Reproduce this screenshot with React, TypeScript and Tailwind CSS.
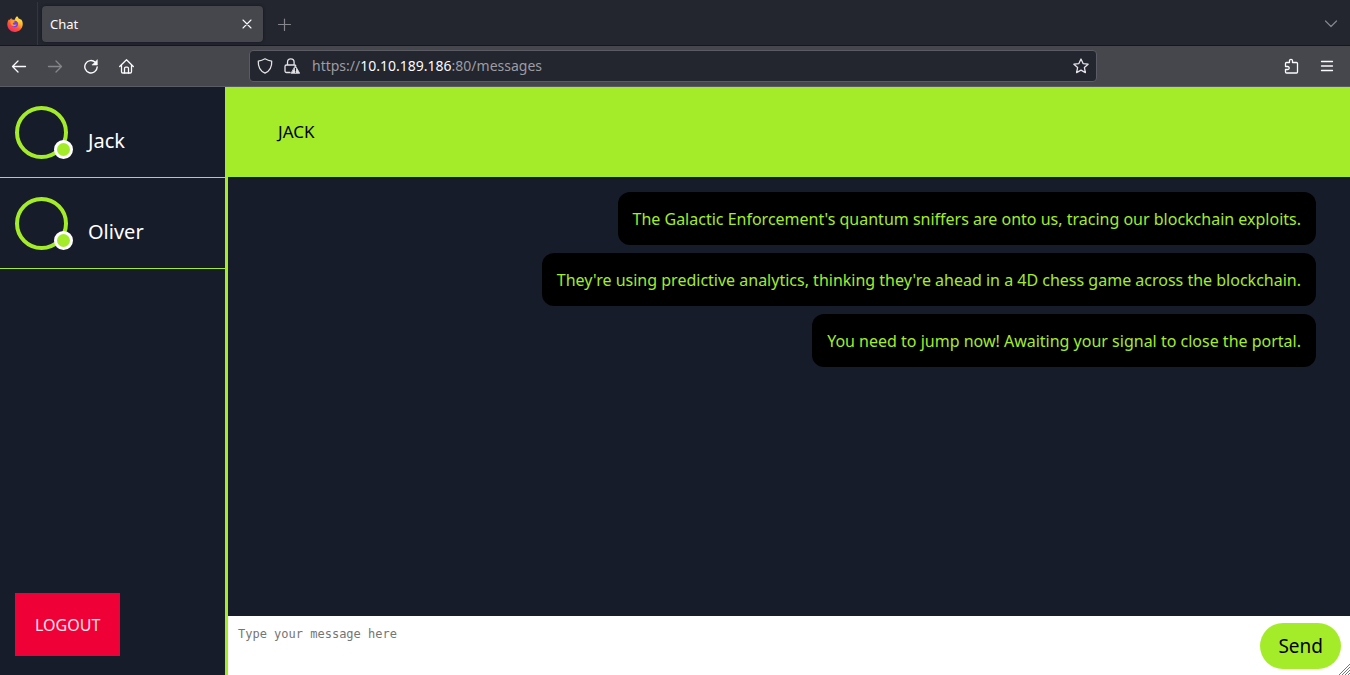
import type { ReactNode } from "react";

const contacts = ["Jack", "Oliver"];

const messages = [
  "The Galactic Enforcement's quantum sniffers are onto us, tracing our blockchain exploits.",
  "They're using predictive analytics, thinking they're ahead in a 4D chess game across the blockchain.",
  "You need to jump now! Awaiting your signal to close the portal.",
];

function Icon({ children, className = "" }: { children: ReactNode; className?: string }) {
  return (
    <svg
      viewBox="0 0 16 16"
      className={`size-4 shrink-0 ${className}`}
      fill="none"
      stroke="currentColor"
      strokeWidth="1.3"
      strokeLinecap="round"
      strokeLinejoin="round"
      aria-hidden="true"
    >
      {children}
    </svg>
  );
}

function ToolButton({ label, children, className = "text-[#fbfbfe]" }: { label: string; children: ReactNode; className?: string }) {
  return (
    <button type="button" aria-label={label} className={`flex h-8 w-9 shrink-0 items-center justify-center ${className}`}>
      {children}
    </button>
  );
}

function FirefoxLogo() {
  return (
    <svg viewBox="0 0 16 16" className="size-4" aria-hidden="true">
      <defs>
        <linearGradient id="flame" x1="0.85" y1="0.05" x2="0.25" y2="0.95">
          <stop offset="0" stopColor="#fff44f" />
          <stop offset="0.35" stopColor="#ffb52e" />
          <stop offset="0.65" stopColor="#ff5634" />
          <stop offset="1" stopColor="#f52c63" />
        </linearGradient>
      </defs>
      <path
        d="M10 0.2c1 .7 1.4 1.600 1.800 2.500 1-.1 1.300.5 1.700 1 .2-.3.2-.6.1-1C15 4 16 6.300 15.700 8.800 15.300 13 12 15.900 8 15.900 3.700 15.900.4 12.700.3 8.400.3 6.200 1 4.500 2.100 3.200l.4 1.100L4.300 1.900l.4 1.700c1-.2 2 0 2.800.4C8 2.500 8.700 1.200 10 .2z"
        fill="url(#flame)"
      />
      <circle cx="7.800" cy="8" r="3.200" fill="#7542e5" />
      <path d="M3.600 5.400c1.500-.9 3-.6 4.300.4-.2.9-1.200 1-2 1.200-.4.7.1 1.600 1.200 1.700 1 .1 1.600-.6 2.500-.1-.7 1.500-2.500 2.100-4 1.400-1.600-.8-2.500-2.800-2-4.600z" fill="#ff9a2e" />
      <path d="M9 2.700c2.700 1 4.100 3.300 3.700 5.900-.2-1.300-.9-2.300-1.900-2.800C9.700 5.200 8.900 4.200 9 2.700z" fill="#ffdb40" />
    </svg>
  );
}

function TabStrip() {
  return (
    <div className="flex h-[46px] items-center border-b border-[#15161f] bg-[#23252f] pt-[2px]">
      <div className="flex h-full w-[38px] items-center border-r border-[#34363f] pl-[7px]">
        <FirefoxLogo />
      </div>
      <div className="ml-1 flex h-9 w-[221px] items-center justify-between rounded bg-[#46474c] pr-2 pl-2 shadow-[0_0_3px_#15161f]">
        <span className="pt-[3px] text-[13px] text-[#fbfbfe]">Chat</span>
        <button type="button" aria-label="Close tab" className="text-[#fbfbfe]">
          <Icon>
            <path d="m4 4 8 8m0-8-8 8" strokeWidth="1.100" />
          </Icon>
        </button>
      </div>
      <button type="button" aria-label="New tab" className="ml-[13px] text-[#85868b]">
        <Icon>
          <path d="M8.500 3v11.500M2.500 8.500h12" strokeWidth="1.200" />
        </Icon>
      </button>
      <button type="button" aria-label="List all tabs" className="mr-[11px] ml-auto text-[#85868b]">
        <Icon>
          <path d="m2.500 5 5.500 5.500L13.500 5" strokeWidth="1.200" />
        </Icon>
      </button>
    </div>
  );
}

function Toolbar() {
  return (
    <div className="flex h-[41px] items-center border-b border-[#5b5b66] bg-[#46474c] pr-[5px] pl-px">
      <ToolButton label="Back">
        <Icon><path d="M14.500 8.500H1.500M7 3 1.500 8.500 7 14" /></Icon>
      </ToolButton>
      <ToolButton label="Forward" className="text-[#85868b]">
        <Icon><path d="M1.500 8.500h13M9 3l5.500 5.500L9 14" /></Icon>
      </ToolButton>
      <ToolButton label="Reload">
        <Icon>
          <path d="M12.300 4.300A6.200 6.200 0 1 0 14.200 9" strokeWidth="1.400" />
          <path d="M14.300 2v5H9.300z" fill="currentColor" strokeWidth="0.600" />
        </Icon>
      </ToolButton>
      <ToolButton label="Home">
        <Icon>
          <path d="M.7 8.500 7.500 1.800l6.800 6.700M2.500 7v6.700c0 .8.500 1.300 1.300 1.300h7.400c.8 0 1.300-.5 1.300-1.300V7" />
          <path d="M5.500 15v-4.500c0-.8.500-1.300 1.300-1.300h1.400c.8 0 1.300.5 1.300 1.300V15" />
        </Icon>
      </ToolButton>
      <div className="flex-[104]" />
      <div className="flex h-8 flex-[832] items-center rounded border border-[#5b5b66] bg-[#23252f] px-[7px] text-[#e4e4e8]">
        <Icon>
          <path d="M8 .8c2 1.200 4.300 2 6.700 2.300.3 5.200-1.700 9.800-6.700 12.100C3 12.900 1 8.300 1.300 3.100 3.700 2.800 6 2 8 .8z" />
        </Icon>
        <Icon className="ml-[11px]">
          <path d="M3.500 7V4.200a3.300 3.300 0 0 1 6.600 0V7M6 14.500H2.500c-.9 0-1.500-.6-1.500-1.500V8.500C1 7.600 1.600 7 2.500 7h8c.5 0 1 .2 1.200.6" />
          <path d="m11.500 8 4.200 7.300H7.300z" fill="currentColor" strokeWidth="0.800" />
          <path d="M11.500 10.300v2.200M11.500 13.900v.2" stroke="#23252f" strokeWidth="1.200" />
        </Icon>
        <div className="ml-3 flex-1 pb-[2px] text-[14px] text-[#9c9da3]">
          https://<span className="text-[#fbfbfe]">10.10.189.186</span>:80/messages
        </div>
        <button type="button" aria-label="Bookmark this page">
          <Icon>
            <path d="m8 1 2.100 4.600 5 .6-3.700 3.400 1 5L8 12.100l-4.400 2.500 1-5L.9 6.200l5-.6z" />
          </Icon>
        </button>
      </div>
      <div className="flex-[176]" />
      <ToolButton label="Extensions">
        <Icon>
          <path d="M6.500 4.500V2.800a1.500 1.500 0 0 1 3 0v1.700h4c.6 0 1 .4 1 1v8.500c0 .6-.4 1-1 1h-10c-.6 0-1-.4-1-1V11.500h2.200a1.500 1.500 0 0 0 0-3H2.500v-3c0-.6.4-1 1-1z" />
        </Icon>
      </ToolButton>
      <ToolButton label="Menu">
        <Icon><path d="M2.500 3.500h11M2.500 8h11M2.500 12.500h11" /></Icon>
      </ToolButton>
    </div>
  );
}

function Contact({ name }: { name: string }) {
  return (
    <li className="border-b border-[#a4ec2a]">
      <a href="#conversation" className="flex h-[90px] items-center gap-5 px-[15px]">
        <span className="relative size-[53px] shrink-0 rounded-full border-4 border-[#a4ec2a]">
          <span className="absolute -right-[9px] -bottom-1 size-[19px] rounded-full border-3 border-white bg-[#a4ec2a]" />
        </span>
        <span className="pt-[18px] text-xl text-white">{name}</span>
      </a>
    </li>
  );
}

export default function App() {
  return (
    <div className="flex min-h-screen flex-col bg-[#171c2b] font-['Noto_Sans',sans-serif]">
      <header>
        <TabStrip />
        <Toolbar />
      </header>
      <div className="flex flex-1">
        <aside className="flex w-1/6 shrink-0 flex-col">
          <ul>
            {contacts.map((name) => (
              <Contact key={name} name={name} />
            ))}
          </ul>
          <button type="button" className="mt-auto mb-[19px] ml-[15px] self-start bg-[#ef0037] px-5 pt-5 pb-[18px] text-base/[25px] text-[#ffe3ea]">
            LOGOUT
          </button>
        </aside>
        <main id="conversation" className="flex min-w-0 flex-1 flex-col border-l-3 border-[#a4ec2a]">
          <h1 className="flex h-[90px] items-center bg-[#a4ec2a] px-[50px] text-[17px] text-black">JACK</h1>
          <ul className="flex flex-1 flex-col items-end gap-2 py-[15px] pr-[34px] pl-[15px]">
            {messages.map((message) => (
              <li key={message} className="rounded-xl bg-black px-[15px] pt-[15px] pb-[13px] text-base/[25px] text-[#a4ec2a]">
                {message}
              </li>
            ))}
          </ul>
          <form className="relative flex h-[59px] items-start bg-white" onSubmit={(event) => event.preventDefault()}>
            <textarea
              aria-label="Message"
              placeholder="Type your message here"
              className="h-full flex-1 resize-none p-[10px] font-['DejaVu_Sans_Mono',monospace] text-xs text-black outline-none placeholder:text-[#757575]"
            />
            <button type="submit" className="mt-[7px] mr-[9px] h-[46px] rounded-full bg-[#a4ec2a] px-[18px] text-[19px] text-black">
              Send
            </button>
            <svg viewBox="0 0 12 12" className="absolute right-0 bottom-0 size-3" stroke="#777" strokeWidth="1" aria-hidden="true">
              <path d="M1 12 12 1M4 12l8-8M7 12l5-5M10 12l2-2" />
            </svg>
          </form>
        </main>
      </div>
    </div>
  );
}
